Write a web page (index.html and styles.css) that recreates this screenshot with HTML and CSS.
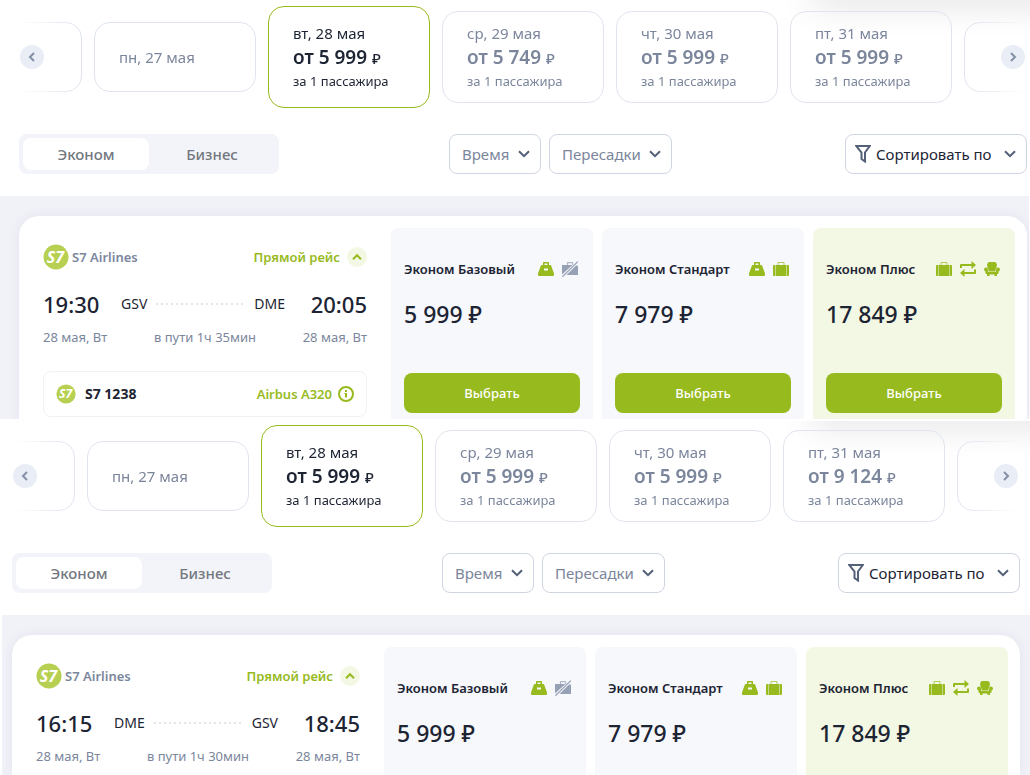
FILE: index.html
```html
<!DOCTYPE html>
<html lang="ru">
<head>
<meta charset="utf-8">
<title>Выбор рейса</title>
<link rel="stylesheet" href="styles.css">
</head>
<body>
<svg class="sprite" aria-hidden="true">
  <symbol id="left" viewBox="0 0 24 24"><path d="M14 8l-4 4 4 4" fill="none" stroke="currentColor" stroke-width="2"/></symbol>
  <symbol id="right" viewBox="0 0 24 24"><path d="M10 8l4 4-4 4" fill="none" stroke="currentColor" stroke-width="2"/></symbol>
  <symbol id="down" viewBox="0 0 12 8"><path d="M1 1.200l5 5 5-5" fill="none" stroke="currentColor" stroke-width="2"/></symbol>
  <symbol id="up" viewBox="0 0 20 20"><path d="M6 12.200l4-4 4 4" fill="none" stroke="currentColor" stroke-width="2"/></symbol>
  <symbol id="funnel" viewBox="0 0 16 18"><path d="M1.200 1h13.600L10 7.500v9L6.500 14V7.500z" fill="none" stroke="currentColor" stroke-width="2"/></symbol>
  <symbol id="info" viewBox="0 0 16 16"><circle cx="8" cy="8" r="7" fill="none" stroke="currentColor" stroke-width="2"/><path d="M7 4h2v2H7zM6.500 7H9v4.500H7V8h-.5z" fill="currentColor"/></symbol>
  <symbol id="bag" viewBox="0 0 16 16"><path fill-rule="evenodd" fill="currentColor" d="M5 1.500Q5 1 5.500 1h5q.5 0 .5.5V4h1.300q.5 0 .8.6L16 12.500q.3 2.500-.8 2.500H.8Q-.3 15 0 12.500L2.900 4.600Q3.200 4 3.700 4H5zM6.500 2.400V4h3V2.400zM6 7.500v2h4v-2z"/></symbol>
  <symbol id="case" viewBox="0 0 16 16"><path fill="currentColor" d="M3 4h10v11H3zM0 5q0-1 1-1h1v11H1q-1 0-1-1zM14 4h1q1 0 1 1v9q0 1-1 1h-1z"/><path d="M2 4h1v11H2zM13 4h1v11h-1z" fill="currentColor" opacity=".5"/><path d="M5 4V1.500h6V4" fill="none" stroke="currentColor" stroke-width="1" opacity=".7"/></symbol>
  <symbol id="nocase" viewBox="0 0 16 16"><path fill="currentColor" d="M0 4h10.500L0 13.500zM14 4.500h1q1 0 1 1V14H4.500z"/><path d="M5.500 4V1.600h5V4" fill="none" stroke="currentColor" stroke-width="1.200" opacity=".7"/><path d="M.4 15.700L15.800.6" stroke="currentColor" stroke-width="1.300"/></symbol>
  <symbol id="swap" viewBox="0 0 16 16"><path d="M1 7V4h12M15 8.500V12H3" fill="none" stroke="currentColor" stroke-width="2" stroke-linejoin="round"/><path d="M11.500 0L16 4l-4.500 4zM4.500 8L0 12l4.500 4z" fill="currentColor"/></symbol>
  <symbol id="seat" viewBox="0 0 16 16"><path fill="currentColor" d="M3.500 6.500Q2 1 6 1h4q4 0 2.500 5.500L11.500 8.500v2h-7v-2z"/><path fill="currentColor" d="M0 8.500Q0 6.500 2 6.500t2 2V11h8V8.500q0-2 2-2t2 2q0 1.500-1.500 2V12q0 1-1 1H13v2h-2.500v-1.500h-5V15H3v-2h-.5q-1 0-1-1v-1.500Q0 10 0 8.500z"/></symbol>
</svg>

<main class="page">
  <section class="leg leg-out">
    <div class="dates">
      <div class="strip">
        <button class="date" aria-label="Ранее"></button>
        <button class="date"><span>пн, 27 мая</span></button>
        <button class="date selected"><span>вт, 28 мая</span><b>от 5 999 <i>₽</i></b><small>за 1 пассажира</small></button>
        <button class="date"><span>ср, 29 мая</span><b>от 5 749 <i>₽</i></b><small>за 1 пассажира</small></button>
        <button class="date"><span>чт, 30 мая</span><b>от 5 999 <i>₽</i></b><small>за 1 пассажира</small></button>
        <button class="date"><span>пт, 31 мая</span><b>от 5 999 <i>₽</i></b><small>за 1 пассажира</small></button>
        <button class="date" aria-label="Позднее"></button>
      </div>
      <button class="arrow prev" aria-label="Назад"><svg><use href="#left"/></svg></button>
      <button class="arrow next" aria-label="Вперёд"><svg><use href="#right"/></svg></button>
    </div>
    <div class="toolbar">
      <div class="tabs"><button class="tab active">Эконом</button><button class="tab">Бизнес</button></div>
      <div class="filters">
        <div class="drop"><select aria-label="Время"><option>Время</option></select><svg class="chev"><use href="#down"/></svg></div>
        <div class="drop"><select aria-label="Пересадки"><option>Пересадки</option></select><svg class="chev"><use href="#down"/></svg></div>
      </div>
      <div class="drop sort"><svg class="funnel"><use href="#funnel"/></svg><select aria-label="Сортировать по"><option>Сортировать по</option></select><svg class="chev"><use href="#down"/></svg></div>
    </div>
    <div class="results">
      <article class="card">
        <div class="flight">
          <div class="head"><svg class="logo" viewBox="0 0 26 26"><circle cx="13" cy="13" r="12.500" fill="#b7d052"/><text x="12.500" y="18.500" text-anchor="middle" class="logo-text">S7</text></svg><span class="airline">S7 Airlines</span><span class="direct">Прямой рейс</span><button class="toggle" aria-label="Свернуть"><svg><use href="#up"/></svg></button></div>
          <div class="route"><time>19:30</time><span>GSV</span><div class="dots"></div><span>DME</span><time>20:05</time></div>
          <div class="when"><span>28 мая, Вт</span><span>в пути 1ч 35мин</span><span>28 мая, Вт</span></div>
          <div class="segment"><svg class="logo" viewBox="0 0 26 26"><circle cx="13" cy="13" r="12.500" fill="#b7d052"/><text x="12.500" y="18.500" text-anchor="middle" class="logo-text">S7</text></svg><strong>S7 1238</strong><a href="#plane">Airbus A320 <svg><use href="#info"/></svg></a></div>
        </div>
        <div class="fares">
          <div class="fare"><div class="fare-head"><h3>Эконом Базовый</h3><div class="icons"><svg><use href="#bag"/></svg><svg class="off"><use href="#nocase"/></svg></div></div><p class="price">5 999 ₽</p><button class="choose">Выбрать</button></div>
          <div class="fare"><div class="fare-head"><h3>Эконом Стандарт</h3><div class="icons"><svg><use href="#bag"/></svg><svg><use href="#case"/></svg></div></div><p class="price">7 979 ₽</p><button class="choose">Выбрать</button></div>
          <div class="fare plus"><div class="fare-head"><h3>Эконом Плюс</h3><div class="icons"><svg><use href="#case"/></svg><svg><use href="#swap"/></svg><svg><use href="#seat"/></svg></div></div><p class="price">17 849 ₽</p><button class="choose">Выбрать</button></div>
        </div>
      </article>
    </div>
  </section>

  <section class="leg leg-back">
    <div class="dates">
      <div class="strip">
        <button class="date" aria-label="Ранее"></button>
        <button class="date"><span>пн, 27 мая</span></button>
        <button class="date selected"><span>вт, 28 мая</span><b>от 5 999 <i>₽</i></b><small>за 1 пассажира</small></button>
        <button class="date"><span>ср, 29 мая</span><b>от 5 999 <i>₽</i></b><small>за 1 пассажира</small></button>
        <button class="date"><span>чт, 30 мая</span><b>от 5 999 <i>₽</i></b><small>за 1 пассажира</small></button>
        <button class="date"><span>пт, 31 мая</span><b>от 9 124 <i>₽</i></b><small>за 1 пассажира</small></button>
        <button class="date" aria-label="Позднее"></button>
      </div>
      <button class="arrow prev" aria-label="Назад"><svg><use href="#left"/></svg></button>
      <button class="arrow next" aria-label="Вперёд"><svg><use href="#right"/></svg></button>
    </div>
    <div class="toolbar">
      <div class="tabs"><button class="tab active">Эконом</button><button class="tab">Бизнес</button></div>
      <div class="filters">
        <div class="drop"><select aria-label="Время"><option>Время</option></select><svg class="chev"><use href="#down"/></svg></div>
        <div class="drop"><select aria-label="Пересадки"><option>Пересадки</option></select><svg class="chev"><use href="#down"/></svg></div>
      </div>
      <div class="drop sort"><svg class="funnel"><use href="#funnel"/></svg><select aria-label="Сортировать по"><option>Сортировать по</option></select><svg class="chev"><use href="#down"/></svg></div>
    </div>
    <div class="results">
      <article class="card">
        <div class="flight">
          <div class="head"><svg class="logo" viewBox="0 0 26 26"><circle cx="13" cy="13" r="12.500" fill="#b7d052"/><text x="12.500" y="18.500" text-anchor="middle" class="logo-text">S7</text></svg><span class="airline">S7 Airlines</span><span class="direct">Прямой рейс</span><button class="toggle" aria-label="Свернуть"><svg><use href="#up"/></svg></button></div>
          <div class="route"><time>16:15</time><span>DME</span><div class="dots"></div><span>GSV</span><time>18:45</time></div>
          <div class="when"><span>28 мая, Вт</span><span>в пути 1ч 30мин</span><span>28 мая, Вт</span></div>
        </div>
        <div class="fares">
          <div class="fare"><div class="fare-head"><h3>Эконом Базовый</h3><div class="icons"><svg><use href="#bag"/></svg><svg class="off"><use href="#nocase"/></svg></div></div><p class="price">5 999 ₽</p></div>
          <div class="fare"><div class="fare-head"><h3>Эконом Стандарт</h3><div class="icons"><svg><use href="#bag"/></svg><svg><use href="#case"/></svg></div></div><p class="price">7 979 ₽</p></div>
          <div class="fare plus"><div class="fare-head"><h3>Эконом Плюс</h3><div class="icons"><svg><use href="#case"/></svg><svg><use href="#swap"/></svg><svg><use href="#seat"/></svg></div></div><p class="price">17 849 ₽</p></div>
        </div>
      </article>
    </div>
  </section>
</main>
</body>
</html>
```
FILE: styles.css
```css
* { box-sizing: border-box; }
body { margin: 0; background: #fff; color: #1d2433; font: 14px/20px "Noto Sans", "Open Sans", sans-serif; }
button, select { font: inherit; color: inherit; margin: 0; padding: 0; border: 0; background: none; cursor: pointer; }
svg { display: block; flex: none; }
h3, p { margin: 0; }
.sprite { position: absolute; width: 0; height: 0; }
.page { display: flex; flex-direction: column; min-height: 100vh; }

.leg { position: relative; display: flex; flex-direction: column; overflow: hidden; padding-top: 6px; }
.leg::before { content: ""; position: absolute; top: -12px; left: 79%; right: -40px; height: 12px; box-shadow: 0 0 34px 2px rgba(0, 0, 0, .18); }
.leg-out .dates, .leg-out .toolbar { margin-left: 19px; margin-right: 3px; }
.leg-out .results { margin-right: 1px; padding: 20px 2px 0 19px; }
.leg-back { flex: 1; margin-top: 2px; padding-top: 4px; }
.leg-back .dates, .leg-back .toolbar { margin-left: 12px; margin-right: 10px; }
.leg-back .results { flex: 1; margin-left: 2px; padding: 20px 10px 0 10px; }

.dates { position: relative; }
.strip { display: flex; align-items: center; justify-content: center; gap: 12px; overflow: hidden; -webkit-mask-image: linear-gradient(90deg, transparent, #000 60px, #000 calc(100% - 60px), transparent); mask-image: linear-gradient(90deg, transparent, #000 60px, #000 calc(100% - 60px), transparent); }
.date { flex: none; display: flex; flex-direction: column; justify-content: center; align-items: flex-start; width: 162px; min-height: 70px; padding: 10px 24px; border: 1px solid #dfe4ee; border-radius: 16px; color: #7b869c; font-size: 15px; line-height: 22px; text-align: left; }
.date.selected { padding-top: 15px; padding-bottom: 15px; border-color: #97ba1e; color: #1d2433; }
.date b { font-size: 19px; line-height: 26px; font-weight: 600; }
.date i { font-size: 15px; line-height: 15px; font-style: normal; font-weight: 500; }
.date small { font-size: 13px; line-height: 22px; }
.arrow { position: absolute; top: 50%; margin-top: -12px; width: 24px; height: 24px; border-radius: 50%; background: #e9edf5; color: #8490a6; }
.arrow svg { width: 24px; height: 24px; }
.prev { left: 1px; }
.next { right: 2px; }

.toolbar { display: flex; align-items: center; padding: 26px 0 22px; font-size: 15px; }
.tabs { display: grid; grid-template-columns: 1fr 1fr; width: 260px; height: 40px; padding: 4px; border-radius: 8px; background: #f3f4f9; color: #73777f; font-weight: 500; }
.tab { border-radius: 8px; }
.tab.active { background: #fff; }
.filters { display: flex; gap: 8px; margin-left: 170px; }
.drop { position: relative; height: 40px; border: 1px solid #cfd5e2; border-radius: 8px; color: #7b869c; }
.drop select { height: 100%; appearance: none; padding: 0 30px 0 12px; border-radius: 8px; outline: 0; }
.chev { position: absolute; right: 10px; top: 15px; width: 12px; height: 8px; color: #536078; pointer-events: none; }
.sort { margin-left: auto; color: #1d2433; }
.drop.sort select { padding: 0 34px 0 30px; }
.funnel { position: absolute; left: 9px; top: 10px; width: 16px; height: 18px; color: #536078; pointer-events: none; }

.results { display: flex; background: #f1f2f8; }
.card { flex: 1; display: grid; grid-template-columns: 372px 1fr; padding-right: 12px; border-radius: 20px 20px 0 0; background: #fff; box-shadow: 0 0 12px rgba(60, 60, 120, .08); }
.flight { padding: 28px 24px 2px; }
.head { display: flex; align-items: center; height: 26px; font-weight: 600; font-size: 13px; color: #7b869c; }
.logo { width: 26px; height: 26px; }
.logo-text { font: italic 700 16px "Open Sans", sans-serif; fill: #fff; }
.airline { margin-left: 3px; }
.direct { margin-left: auto; color: #97ba1e; }
.toggle { width: 20px; height: 20px; margin-left: 7px; border-radius: 50%; background: #f3f8e4; color: #97ba1e; }
.toggle svg { width: 20px; height: 20px; }
.route { display: flex; align-items: center; gap: 9px; margin-top: 18px; height: 32px; }
.route time { width: 69px; font-size: 22px; font-weight: 500; }
.route time:last-child { width: 73px; text-align: right; }
.dots { flex: 1; height: 2px; background: repeating-linear-gradient(90deg, #e3e5ea 0 2px, transparent 2px 5px); }
.when { display: flex; justify-content: space-between; margin-top: 7px; font-size: 13px; color: #7b869c; }
.segment { display: flex; align-items: center; height: 46px; margin-top: 24px; padding: 0 12px; border: 1px solid #f1f2f6; border-radius: 8px; }
.segment .logo { width: 20px; height: 20px; }
.segment strong { margin-left: 9px; font-size: 14px; font-weight: 700; }
.segment a { display: flex; align-items: center; gap: 6px; margin-left: auto; font-size: 13px; font-weight: 600; color: #97ba1e; text-decoration: none; }
.segment a svg { width: 16px; height: 16px; }

.fares { display: grid; grid-template-columns: repeat(3, 1fr); gap: 9px; padding-top: 12px; }
.fare { padding: 31px 13px 6px; border-radius: 8px 8px 0 0; background: #f6f8fc; }
.fare.plus { background: #f3f8e4; }
.fare-head { display: flex; align-items: center; justify-content: space-between; padding-right: 2px; }
.fare-head h3 { font-size: 13px; line-height: 20px; font-weight: 600; white-space: nowrap; }
.icons { display: flex; gap: 8px; color: #97ba1e; }
.icons svg { width: 16px; height: 16px; }
.icons .off { color: #96a1b6; }
.price { margin-top: 20px; font-size: 23px; line-height: 30px; font-weight: 500; }
.choose { display: block; width: 100%; height: 40px; margin-top: 44px; border-radius: 8px; background: #97ba1e; color: #fff; font-size: 13px; font-weight: 500; }
```
